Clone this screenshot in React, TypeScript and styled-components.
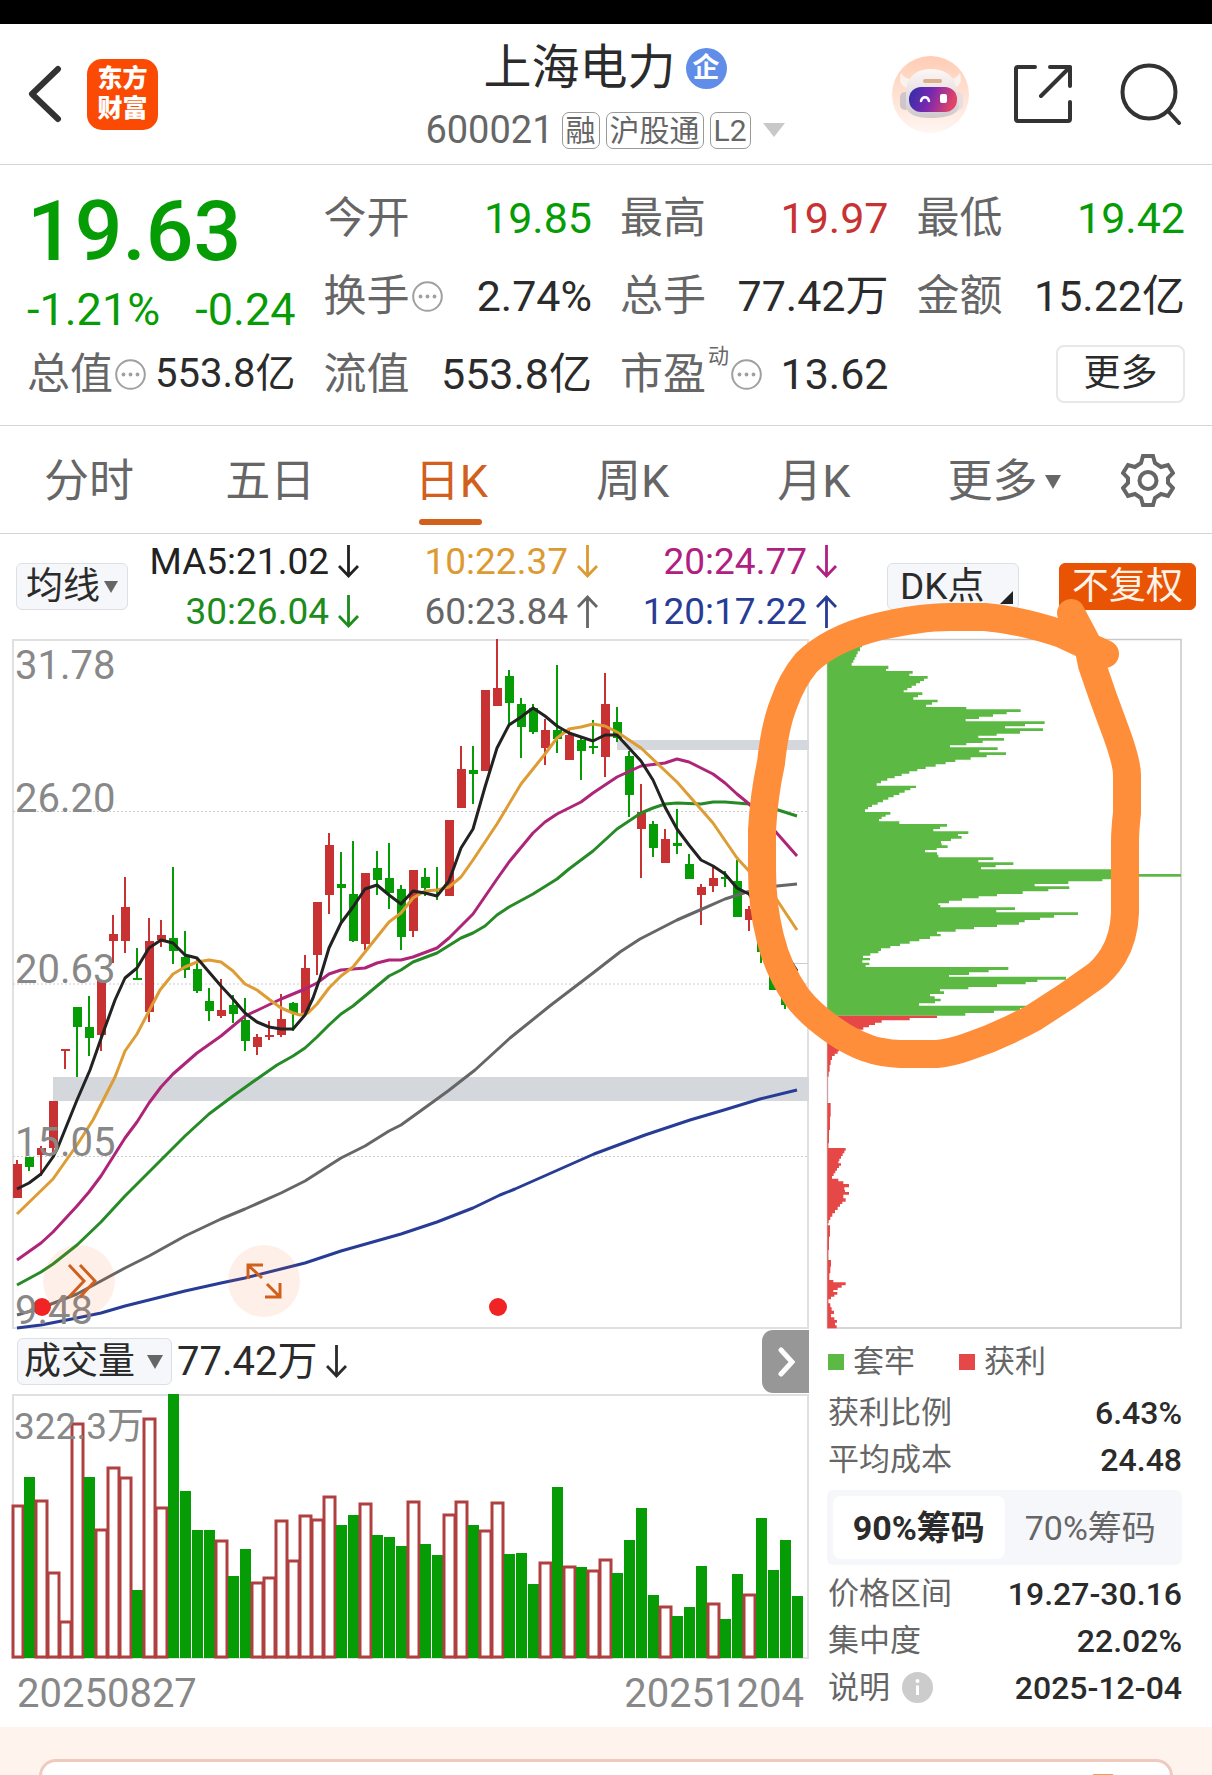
import React from "react";
import styled, { createGlobalStyle } from "styled-components";

const GREEN = "#069c06";
const RED = "#c83232";
const INK = "#2b2b2b";
const MUTED = "#666666";
const AXIS = "#888888";
const ACCENT = "#d0601c";

const Global = createGlobalStyle`
  *, *::before, *::after { box-sizing: border-box; }
  body { margin: 0; background: #fff; }
  body, button {
    font-family: Roboto, "Noto Sans CJK SC", sans-serif;
    color: ${INK};
  }
  button { border: 0; padding: 0; background: none; cursor: pointer; }
  svg { display: block; flex: none; }
`;

const Page = styled.div`
  min-height: 100vh;
  display: flex;
  flex-direction: column;
  overflow: hidden;
`;

const StatusBar = styled.div`
  height: 24px;
  background: #000;
`;

/* ---------- header ---------- */

const Header = styled.header`
  display: grid;
  grid-template-columns: 1fr auto 1fr;
  align-items: center;
  height: 141px;
  padding: 0 30px 0 28px;
  border-bottom: 1px solid #d4d4d4;
`;

const HeaderSide = styled.div<{ $end?: boolean }>`
  display: flex;
  align-items: center;
  justify-content: ${(p) => (p.$end ? "flex-end" : "flex-start")};
  gap: ${(p) => (p.$end ? "44px" : "25px")};
`;

const IconButton = styled.button`
  display: flex;
  align-items: center;
  justify-content: center;
`;

const Logo = styled.a`
  display: flex;
  align-items: center;
  justify-content: center;
  width: 71px;
  height: 71px;
  border-radius: 15px;
  background: #fb4a04;
  color: #fff;
  font-size: 25px;
  font-weight: 900;
  line-height: 30px;
  text-align: center;
  text-decoration: none;
`;

const TitleBlock = styled.div`
  display: flex;
  flex-direction: column;
  align-items: center;
  padding-top: 8px;
`;

const TitleRow = styled.div`
  display: flex;
  align-items: center;
  gap: 10px;
  height: 64px;
`;

const Title = styled.h1`
  margin: 0;
  font-size: 48px;
  font-weight: 400;
  line-height: 64px;
`;

const CompanyBadge = styled.span`
  display: flex;
  align-items: center;
  justify-content: center;
  width: 41px;
  height: 41px;
  border-radius: 50%;
  background: #5f8de8;
  color: #fff;
  font-size: 27px;
  font-weight: 700;
  line-height: 40px;
`;

const CodeRow = styled.div`
  display: flex;
  align-items: center;
  gap: 6px;
  height: 60px;
  color: ${MUTED};
`;

const Code = styled.span`
  margin-right: 2px;
  font-size: 38px;
  line-height: 48px;
`;

const Tag = styled.span`
  height: 37px;
  padding: 0 3px;
  border: 1px solid #999;
  border-radius: 7px;
  font-size: 30px;
  line-height: 35px;
`;

const Caret = styled.span<{ $size?: number; $color?: string }>`
  width: 0;
  height: 0;
  border-style: solid;
  border-color: ${(p) => p.$color || MUTED} transparent transparent;
  border-width: ${(p) => `${(p.$size || 7) * 2 - 2}px ${p.$size || 7}px 0`};
`;

const CodeCaret = styled(Caret)`
  margin-left: 6px;
  border-top-width: 14px;
`;

/* ---------- quote ---------- */

const Quote = styled.section`
  display: grid;
  grid-template-columns: repeat(4, 1fr);
  grid-auto-rows: 78px;
  column-gap: 28px;
  padding: 14px 27px 12px;
  border-bottom: 1px solid #d4d4d4;
`;

const PriceCell = styled.div`
  grid-row: span 2;
  display: flex;
  flex-direction: column;
  padding-top: 8px;
  color: ${GREEN};
`;

const Price = styled.strong`
  font-size: 84px;
  font-weight: 500;
  line-height: 90px;
`;

const Change = styled.div`
  display: flex;
  justify-content: space-between;
  font-size: 45px;
  line-height: 66px;
`;

const Cell = styled.div`
  display: flex;
  align-items: center;
  justify-content: space-between;
  white-space: nowrap;
  line-height: 60px;
`;

const CellLabel = styled.span`
  display: flex;
  align-items: center;
  gap: 2px;
  color: ${MUTED};
  font-size: 43px;
`;

const Sup = styled.sup`
  align-self: flex-start;
  font-size: 21px;
  line-height: 24px;
`;

const CellValue = styled.span<{ $color?: string; $compact?: boolean }>`
  color: ${(p) => p.$color || INK};
  font-size: ${(p) => (p.$compact ? 40 : 43)}px;
`;

const MoreButton = styled.button`
  align-self: center;
  justify-self: end;
  width: 129px;
  height: 58px;
  border: 2px solid #e8e8e8;
  border-radius: 8px;
  font-size: 37px;
  line-height: 50px;
`;

/* ---------- tabs ---------- */

const Tabs = styled.nav`
  display: grid;
  grid-template-columns: repeat(5, 1fr) 200px 84px;
  height: 108px;
  padding-right: 22px;
  border-bottom: 1px solid #d4d4d4;
`;

const Tab = styled.button<{ $active?: boolean }>`
  display: flex;
  align-items: center;
  justify-content: center;
  gap: 8px;
  position: relative;
  padding: 4px 3px 0 0;
  color: ${(p) => (p.$active ? ACCENT : MUTED)};
  font-size: 45px;
  line-height: 60px;

  &::after {
    content: "";
    display: ${(p) => (p.$active ? "block" : "none")};
    position: absolute;
    bottom: 8px;
    left: calc(50% - 34px);
    width: 63px;
    height: 6px;
    border-radius: 3px;
    background: ${ACCENT};
  }
`;

/* ---------- chart area ---------- */

const ChartArea = styled.section`
  position: relative;
`;

const Indicators = styled.div`
  display: flex;
  align-items: center;
  height: 105px;
  padding: 0 16px;
`;

const Chip = styled.button<{ $solid?: boolean }>`
  display: flex;
  align-items: center;
  justify-content: center;
  gap: 4px;
  height: 47px;
  padding: 0 ${(p) => (p.$solid ? 12 : 9)}px;
  border: 1px solid ${(p) => (p.$solid ? "#e85404" : "#dcdfe3")};
  border-radius: 6px;
  background: ${(p) => (p.$solid ? "#e85404" : "#f5f7fa")};
  color: ${(p) => (p.$solid ? "#fff3ea" : INK)};
  font-size: 37px;
  line-height: 44px;
  white-space: nowrap;
`;

const CornerChip = styled(Chip)`
  justify-content: space-between;
  width: 132px;
  margin-left: auto;
  margin-right: 40px;
  padding: 0 5px 0 12px;

  svg {
    align-self: flex-end;
    margin-bottom: 5px;
  }
`;

const Averages = styled.div`
  display: grid;
  grid-template-columns: 231px 239px 239px;
  line-height: 50px;
`;

const Average = styled.span<{ $color: string }>`
  display: flex;
  align-items: center;
  justify-content: flex-end;
  gap: 9px;
  color: ${(p) => p.$color};
  font-size: 37px;
`;

const Panels = styled.div`
  display: grid;
  grid-template-columns: 797fr 355fr;
  column-gap: 18px;
  padding: 0 30px 0 12px;
`;

const Column = styled.div`
  min-width: 0;
`;

const Plot = styled.div`
  position: relative;
`;

const Drawing = styled.svg`
  width: 100%;
  height: auto;
  overflow: visible;
`;

const AxisText = styled.text<{ $small?: boolean }>`
  fill: ${AXIS};
  font-size: ${(p) => (p.$small ? 37 : 40)}px;
`;

const RoundButton = styled.button<{ $left: string }>`
  display: flex;
  align-items: center;
  justify-content: center;
  position: absolute;
  left: ${(p) => p.$left};
  bottom: 12px;
  width: 72px;
  height: 72px;
  border-radius: 50%;
  background: rgba(250, 110, 40, 0.1);
`;

const VolumeHead = styled.div`
  display: flex;
  align-items: center;
  gap: 5px;
  height: 65px;
  padding-left: 5px;
`;

const VolumePick = styled(Chip)`
  width: 155px;
  gap: 12px;
  padding: 0 2px 0 0;
`;

const VolumeValue = styled.span`
  display: flex;
  align-items: center;
  gap: 9px;
  font-size: 40px;
  line-height: 56px;
`;

const Collapse = styled.button`
  display: flex;
  align-items: center;
  justify-content: center;
  width: 47px;
  height: 63px;
  margin-left: auto;
  border-radius: 11px 0 0 11px;
  background: #979797;
`;

const Dates = styled.div`
  display: flex;
  justify-content: space-between;
  padding: 1px 5px 0;
  color: ${AXIS};
  font-size: 40px;
  line-height: 67px;
`;

const Legend = styled.div`
  display: flex;
  align-items: center;
  gap: 44px;
  height: 60px;
  padding: 5px 0 0 1px;
`;

const LegendItem = styled.span<{ $color: string }>`
  display: flex;
  align-items: center;
  gap: 9px;
  color: ${MUTED};
  font-size: 31px;
  line-height: 40px;

  &::before {
    content: "";
    width: 16px;
    height: 16px;
    background: ${(p) => p.$color};
  }
`;

const Stat = styled.div`
  display: flex;
  align-items: center;
  justify-content: space-between;
  height: 47px;
  padding-left: 1px;
  color: ${MUTED};
  font-size: 31px;
  line-height: 44px;
  white-space: nowrap;
`;

const StatLabel = styled.span`
  display: flex;
  align-items: center;
  gap: 12px;
`;

const StatValue = styled.strong`
  color: ${INK};
  font-size: 32px;
  font-weight: 500;
`;

const Segments = styled.div`
  display: grid;
  grid-template-columns: 1fr 1fr;
  height: 75px;
  margin: 7px 0 5px;
  padding: 6px;
  border-radius: 6px;
  background: #f6f7fa;
`;

const Segment = styled.button<{ $active?: boolean }>`
  border-radius: 8px;
  background: ${(p) => (p.$active ? "#fff" : "transparent")};
  color: ${(p) => (p.$active ? INK : MUTED)};
  font-size: 34px;
  font-weight: ${(p) => (p.$active ? 700 : 400)};
  line-height: 60px;
`;

const Marker = styled.svg`
  position: absolute;
  top: 0;
  left: 0;
  width: 100%;
  height: auto;
  pointer-events: none;
`;

const Promo = styled.section`
  flex: 1 0 49px;
  display: flex;
  padding: 32px 39px 0;
  background: #fff3ee;
`;

const PromoCard = styled.div`
  flex: 1;
  display: flex;
  justify-content: flex-end;
  align-items: flex-end;
  padding-right: 56px;
  border: 3px solid #efcabd;
  border-bottom: 0;
  border-radius: 24px 24px 0 0;
  background: #fff;
`;

const PromoDot = styled.span`
  width: 22px;
  height: 2px;
  border-radius: 11px 11px 0 0;
  background: #eca055;
`;

/* ---------- small drawings ---------- */

const Dots = () => (
  <svg width="31" height="31" viewBox="0 0 31 31" aria-hidden="true">
    <circle cx="15.5" cy="15.5" r="14.3" fill="none" stroke="#a0a0a0" strokeWidth="2" />
    {[8.5, 15.5, 22.5].map((x) => (
      <circle key={x} cx={x} cy="15.5" r="1.9" fill="#a0a0a0" />
    ))}
  </svg>
);

const Arrow = ({ up = false, height = 33 }: { up?: boolean; height?: number }) => (
  <svg width="21" height={height} viewBox="0 0 21 33" fill="none" stroke="currentColor" strokeWidth="2.8" aria-hidden="true">
    <path d={up ? "M10.5 33V2M1 12l9.5-10L20 12" : "M10.5 0v31M1 21l9.5 10L20 21"} />
  </svg>
);

const Robot = () => (
  <svg width="77" height="77" viewBox="0 0 77 77" aria-hidden="true">
    <defs>
      <linearGradient id="halo" x1="0" y1="0" x2="0" y2="1">
        <stop offset="0" stopColor="#ffccb3" />
        <stop offset="1" stopColor="#fff6f2" />
      </linearGradient>
      <linearGradient id="visor" x1="0" y1="0" x2="1" y2="0.2">
        <stop offset="0" stopColor="#2c2fa8" />
        <stop offset="0.5" stopColor="#7a28b0" />
        <stop offset="1" stopColor="#e04468" />
      </linearGradient>
      <linearGradient id="shell" x1="0" y1="0" x2="0" y2="1">
        <stop offset="0" stopColor="#fdf8f6" />
        <stop offset="1" stopColor="#cfc8cc" />
      </linearGradient>
    </defs>
    <circle cx="38.5" cy="38.5" r="38.5" fill="url(#halo)" />
    <path d="M9 17c-2 7-1 13 6 15l8-9c-6 1-11-1-14-6zM68 17c2 7 1 13-6 15l-8-9c6 1 11-1 14-6z" fill="#fbf1ee" />
    <rect x="8" y="36" width="10" height="18" rx="5" fill="#cfc6cc" />
    <rect x="61" y="36" width="10" height="18" rx="5" fill="#e9dde0" />
    <path d="M14 38c0-16 9-25 25-25s26 9 26 25l2 12c0 8-12 12-28 12S15 58 14 50z" fill="url(#shell)" />
    <rect x="31" y="23" width="19" height="4" rx="2" fill="#dcae8b" />
    <rect x="17" y="31" width="48" height="25" rx="12" fill="url(#visor)" />
    <path d="M29 45c1-5 7-5 8 0" fill="none" stroke="#fff" strokeWidth="2.5" strokeLinecap="round" />
    <rect x="48" y="38" width="7" height="9" rx="2" fill="#fff" />
  </svg>
);

const Gear = () => (
  <svg width="54" height="54" viewBox="0 0 54 54" fill="none" stroke={MUTED} strokeWidth="4" aria-hidden="true">
    <path d="M22 3h10l2 7 6 4 7-2 5 8-5 5v5l5 5-5 8-7-2-6 4-2 7H22l-2-7-6-4-7 2-5-8 5-5v-5l-5-5 5-8 7 2 6-4z" />
    <circle cx="27" cy="27.5" r="8.5" />
  </svg>
);

/* ---------- data ---------- */

type Candle = [up: 0 | 1, high: number, top: number, bottom: number, low: number];

const candles: Candle[] = [
  [1, 1160, 1164, 1198, 1198], [0, 1157, 1157, 1167, 1171], [1, 1146, 1148, 1155, 1176], [1, 1101, 1101, 1148, 1155],
  [1, 1049, 1049, 1051, 1069], [0, 1007, 1007, 1027, 1077], [0, 996, 1027, 1038, 1056], [1, 980, 980, 1035, 1051],
  [1, 915, 934, 941, 963], [1, 877, 907, 941, 953], [0, 948, 978, 980, 980], [1, 918, 941, 1012, 1022],
  [1, 920, 935, 940, 947], [0, 867, 938, 951, 964], [0, 931, 957, 970, 978], [0, 958, 969, 991, 993],
  [0, 988, 1001, 1011, 1021], [1, 979, 1010, 1016, 1018], [0, 995, 1005, 1014, 1023], [0, 998, 1020, 1041, 1051],
  [1, 1034, 1037, 1047, 1055], [1, 1021, 1035, 1037, 1040], [1, 994, 1019, 1035, 1037], [0, 1002, 1003, 1013, 1031],
  [1, 955, 968, 1013, 1013], [1, 902, 902, 955, 975], [1, 833, 845, 895, 914], [0, 852, 884, 888, 925],
  [0, 841, 894, 941, 942], [1, 873, 873, 944, 950], [0, 851, 868, 880, 895], [0, 843, 878, 893, 909],
  [0, 885, 889, 937, 950], [1, 870, 870, 931, 937], [0, 868, 877, 888, 896], [0, 867, 889, 891, 900],
  [1, 820, 820, 896, 896], [1, 746, 769, 808, 808], [0, 746, 770, 774, 804], [1, 690, 690, 771, 771],
  [1, 639, 688, 706, 706], [0, 670, 676, 703, 724], [0, 698, 704, 727, 758], [0, 704, 708, 732, 734],
  [1, 719, 730, 748, 765], [0, 665, 730, 739, 753], [1, 728, 735, 760, 760], [0, 736, 740, 751, 780],
  [0, 720, 746, 748, 754], [1, 673, 704, 757, 777], [0, 707, 722, 738, 742], [0, 751, 756, 795, 817],
  [1, 784, 812, 829, 878], [0, 821, 824, 848, 857], [1, 829, 839, 863, 863], [0, 809, 843, 846, 854],
  [0, 854, 864, 879, 879], [1, 884, 887, 895, 925], [1, 867, 878, 886, 892], [0, 871, 877, 879, 887],
  [0, 860, 881, 917, 917], [1, 906, 909, 920, 931], [0, 930, 930, 952, 963], [0, 950, 950, 990, 990],
  [0, 985, 985, 1005, 1009],
];

const averages: { color: string; points: string }[] = [
  { color: "#666", points: "17,1315 41,1308 77,1294 101,1281 125,1268 149,1256 185,1236 221,1219 245,1209 281,1193 305,1181 341,1158 365,1146 389,1131 401,1125 437,1099 448,1091 475,1070 510,1038 551,1005 593,973 620,952 640,939 677,920 700,910 725,899 747,892 777,886 797,884" },
  { color: "#283c96", points: "17,1328 41,1325 77,1318 101,1313 125,1306 149,1300 185,1291 221,1283 245,1278 305,1263 341,1251 401,1234 437,1222 473,1208 500,1195 515,1189 594,1154 645,1135 690,1120 724,1110 760,1099 797,1090" },
  { color: "#268a26", points: "17,1285 41,1272 53,1264 77,1245 101,1222 125,1196 149,1172 185,1136 209,1114 233,1096 257,1079 277,1065 293,1056 305,1048 317,1037 329,1025 341,1014 353,1006 365,996 389,976 401,970 413,962 437,953 461,938 473,933 485,926 497,915 509,907 533,894 557,879 569,869 593,851 617,829 641,813 653,808 665,804 677,803 701,804 713,802 725,802 749,804 775,809 797,816" },
  { color: "#ae2478", points: "17,1260 41,1243 53,1232 77,1206 89,1192 101,1176 125,1138 137,1122 149,1103 161,1087 173,1074 197,1053 221,1036 245,1016 258,1010 281,999 305,989 317,983 329,974 341,970 365,968 377,963 389,960 401,960 413,957 437,948 449,938 473,914 497,879 509,862 533,833 545,822 557,814 569,808 581,802 593,793 617,777 641,766 665,763 677,759 689,762 701,768 713,774 725,783 737,794 748,803 775,831 797,856" },
  { color: "#de9c34", points: "17,1214 53,1179 77,1145 93,1120 115,1077 125,1051 137,1034 149,1011 160,990 173,974 185,967 197,962 209,960 221,962 233,971 245,984 257,990 270,1000 281,1008 293,1013 300,1015 308,1013 317,1004 329,988 341,976 353,967 365,952 377,937 389,922 401,913 413,898 425,891 437,890 449,887 461,877 473,860 497,824 521,784 533,769 545,754 557,738 569,729 581,727 593,724 605,726 617,732 629,740 641,748 677,782 713,823 737,858 749,871 775,897 797,930" },
  { color: "#222", points: "17,1189 29,1183 41,1174 53,1157 58,1147 77,1100 90,1070 103,1033 115,1000 125,978 137,968 149,948 161,940 173,943 185,955 197,958 209,972 221,986 233,999 245,1013 257,1022 269,1027 281,1029 293,1029 305,1015 313,998 320,978 329,948 341,923 353,907 365,889 377,885 389,895 401,904 413,891 425,893 437,896 449,881 461,848 473,829 485,787 497,748 509,725 521,717 533,708 545,716 557,726 569,733 581,737 593,741 605,735 617,735 629,748 641,761 653,780 665,807 677,829 689,845 701,860 713,866 725,874 737,888 749,894 785,952 797,971" },
];

/* positive = rising day (outlined), negative = falling day (filled); value is the bar height */
const volumes = [
  153, -181, 158, 86, 37, 235, -181, 129, 191, 181, -68, 240, 151, -264, -167, -128, -128, 118, -82, -109, 76, 81, 138,
  98, 143, 139, 162, -133, -143, 155, -123, -121, -112, 157, -114, -103, 144, 157, -133, 128, 156, -104, -105, -74, 96,
  -171, 92, -91, 88, 99, -85, -118, -150, -63, 52, -42, -51, -92, 55, -39, -84, 64, -140, -88, -118, -62,
];

/* [y, x] steps of the holding-cost histogram in thirds of a pixel */
const trapped = [
  [28, 190], [40, 186], [52, 180], [64, 173], [73, 169], [82, 164], [90, 160], [98, 155],
  [107, 265], [117, 258], [123, 338], [131, 328], [138, 383], [146, 372], [153, 360], [160, 348], [167, 335], [174, 322],
  [181, 311], [187, 367], [195, 354], [202, 340], [209, 413], [217, 396], [224, 378], [231, 499], [238, 662], [246, 620],
  [253, 579], [260, 537], [267, 497], [274, 734], [282, 675], [289, 615], [295, 729], [303, 660], [311, 590], [317, 535],
  [324, 612], [332, 548], [339, 499], [346, 450], [352, 593], [360, 538], [367, 618], [375, 560], [382, 512], [389, 466],
  [396, 437], [403, 407], [410, 377], [417, 352], [424, 328], [431, 305], [438, 284], [445, 262], [452, 243], [460, 230],
  [467, 348], [474, 331], [481, 314], [488, 298], [495, 281], [502, 265], [509, 249], [517, 233], [524, 216], [531, 204],
  [538, 195], [546, 271], [554, 257], [560, 245], [567, 237], [574, 298], [582, 441], [590, 420], [597, 400], [604, 505],
  [612, 474], [618, 485], [626, 453], [633, 423], [640, 425], [646, 443], [654, 410], [660, 375], [667, 411], [674, 415],
  [682, 580], [690, 535], [697, 640], [705, 587], [712, 543], [718, 945], [732, 1143], [740, 945], [748, 907], [754, 805],
  [762, 704], [769, 808], [777, 745], [784, 668], [792, 591], [799, 536], [805, 486], [812, 447], [820, 415], [825, 421],
  [832, 645], [840, 589], [847, 834], [855, 762], [863, 720], [870, 674], [877, 657], [884, 591], [891, 522], [898, 467],
  [905, 411], [912, 422], [919, 390], [927, 358], [934, 329], [941, 300], [948, 271], [955, 243], [963, 235], [970, 211],
  [977, 189], [984, 210], [991, 187], [998, 208], [1005, 197], [1011, 625], [1020, 566], [1027, 507], [1035, 447],
  [1040, 798], [1049, 712], [1056, 677], [1063, 591], [1071, 505], [1078, 420], [1084, 432], [1092, 390], [1099, 404],
  [1106, 422], [1114, 405], [1120, 357], [1127, 690], [1134, 660], [1142, 582], [1149, 496], [1157, 82],
];

const profit = [
  [1157, 411], [1164, 329], [1171, 245], [1178, 225], [1185, 207], [1192, 190], [1199, 170], [1207, 150], [1215, 135],
  [1225, 128], [1240, 122], [1255, 117], [1264, 113], [1271, 104], [1278, 96], [1290, 92], [1305, 89], [1325, 86],
  [1340, 83], [1419, 92], [1460, 90], [1500, 87], [1540, 85], [1554, 137], [1562, 133], [1570, 128], [1578, 123],
  [1586, 118], [1594, 115], [1600, 123], [1607, 117], [1614, 111], [1622, 106], [1630, 101], [1638, 96], [1646, 115],
  [1654, 130], [1662, 147], [1672, 133], [1680, 135], [1686, 147], [1694, 130], [1705, 137], [1715, 127], [1722, 120],
  [1730, 113], [1740, 105], [1750, 97], [1760, 91], [1770, 86], [1780, 83], [1786, 90], [1820, 87], [1860, 85],
  [1890, 93], [1910, 91], [1930, 88], [1950, 100], [1957, 137], [1966, 125], [1973, 113], [1980, 100], [1986, 112],
  [1994, 103], [2000, 93], [2008, 85], [2020, 91], [2032, 95], [2042, 102], [2052, 93], [2062, 103], [2070, 111],
  [2078, 105], [2086, 110], [2095, 82],
];

const stepPath = (steps: number[][]) =>
  `M82 ${steps[0][0]}` + steps.map(([y, x]) => `V${y}H${x}`).join("") + "H82Z";

const tabs = ["分时", "五日", "日K", "周K", "月K"];

const maValues = [
  { text: "MA5:21.02", color: "#222222", up: false },
  { text: "10:22.37", color: "#dc9a32", up: false },
  { text: "20:24.77", color: "#b02080", up: false },
  { text: "30:26.04", color: "#1c8c1c", up: false },
  { text: "60:23.84", color: "#666666", up: true },
  { text: "120:17.22", color: "#283c96", up: true },
];

const axisLabels: [string, number][] = [
  ["31.78", 679], ["26.20", 812], ["20.63", 983], ["15.05", 1156], ["9.48", 1324],
];

/* ---------- charts ---------- */

const PriceChart = () => (
  <Drawing viewBox="12 639 797 690" role="img" aria-label="日K线图">
    <rect x="13" y="640" width="795" height="688" fill="none" stroke="#e0e0e0" strokeWidth="2" />
    {[811.5, 984, 1156.5].map((y) => (
      <path key={y} d={`M13 ${y}H808`} stroke="#cccccc" strokeDasharray="2 2" />
    ))}
    <rect x="53" y="1077" width="756" height="24" fill="#d4d7dc" />
    <rect x="617" y="740" width="192" height="10" fill="#d4d7dc" />
    <path d="M790 963.5H808" stroke="#cccccc" />
    {candles.map(([up, high, top, bottom, low], i) => {
      const x = 17 + i * 12;
      return (
        <g key={i} fill={up ? RED : GREEN}>
          <rect x={x - 1} y={high} width="2" height={low - high} />
          <rect x={x - 4} y={top} width="9" height={bottom - top} />
        </g>
      );
    })}
    {averages.map((a) => (
      <polyline key={a.color} points={a.points} fill="none" stroke={a.color} strokeWidth="3" strokeLinejoin="round" />
    ))}
    <circle cx="42" cy="1307" r="9" fill="#f02424" />
    <circle cx="498" cy="1307" r="9" fill="#f02424" />
    {axisLabels.map(([label, y]) => (
      <AxisText key={label} x="15" y={y}>{label}</AxisText>
    ))}
  </Drawing>
);

const VolumeChart = () => (
  <Drawing viewBox="0 0 797 265" role="img" aria-label="成交量图">
    <rect x="1" y="1" width="795" height="263" fill="none" stroke="#e0e0e0" strokeWidth="2" />
    {volumes.map((v, i) =>
      v < 0 ? (
        <rect key={i} x={i * 12} y={264 + v} width="11" height={-v} fill={GREEN} />
      ) : (
        <rect
          key={i}
          x={Math.max(i * 12, 1)}
          y={265 - v}
          width={i ? 11 : 10}
          height={v - 2}
          fill="#fff"
          stroke="#b04040"
          strokeWidth="3"
        />
      ),
    )}
    <AxisText $small x="2" y="45">322.3万</AxisText>
  </Drawing>
);

const CostChart = () => (
  <Drawing viewBox="827 639 355 690" role="img" aria-label="筹码分布">
    <path d="M827.5 639.5H1181V1328H827.5Z" fill="none" stroke="#c8c8c8" strokeWidth="1.5" />
    <g transform="translate(800 630) scale(0.33333)">
      <path d={stepPath(trapped)} fill="#5cba44" />
      <path d={stepPath(profit)} fill="#e64848" />
    </g>
  </Drawing>
);

const HandCircle = () => (
  <Marker viewBox="0 534 1212 1192" fill="none" stroke="#ff8e3a" strokeWidth="28" strokeLinecap="round" strokeLinejoin="round" aria-hidden="true">
    <path d="M1071 613L1088 645L1092 665L1103 697L1117 735Q1127 763 1127 775V813Q1125 830 1125 843V913Q1124 938 1113 956Q1104 970 1094 977L1067 996L1033 1018Q1000 1036 967 1047Q950 1053 937 1054H900Q880 1053 867 1048Q850 1042 833 1030Q810 1014 797 997Q778 970 770 937Q762 905 762 870V830Q764 795 771 763Q775 725 784 703Q792 680 806 663Q830 639 877 627Q920 617 950 617H985Q1020 620 1062 634L1094 649L1105 654" />
  </Marker>
);

export default function App() {
  return (
    <>
      <Global />
      <Page>
        <StatusBar />
        <Header>
          <HeaderSide>
            <IconButton aria-label="返回">
              <svg width="34" height="58" viewBox="0 0 34 58" fill="none" stroke="#333" strokeWidth="6" strokeLinecap="round" strokeLinejoin="round">
                <path d="M30 4L4 29L30 54" />
              </svg>
            </IconButton>
            <Logo href="#home">东方<br />财富</Logo>
          </HeaderSide>
          <TitleBlock>
            <TitleRow>
              <Title>上海电力</Title>
              <CompanyBadge>企</CompanyBadge>
            </TitleRow>
            <CodeRow>
              <Code>600021</Code>
              <Tag>融</Tag>
              <Tag>沪股通</Tag>
              <Tag>L2</Tag>
              <CodeCaret $size={11} $color="#c8c8c8" />
            </CodeRow>
          </TitleBlock>
          <HeaderSide $end>
            <IconButton aria-label="智能助手"><Robot /></IconButton>
            <IconButton aria-label="分享">
              <svg width="60" height="60" viewBox="0 0 60 60" fill="none" stroke="#333" strokeWidth="4" strokeLinecap="round" strokeLinejoin="round">
                <path d="M22 3H5Q3 3 3 5V55Q3 57 5 57H55Q57 57 57 55V38M37 3H57V22M57 3L28 32" />
              </svg>
            </IconButton>
            <IconButton aria-label="搜索">
              <svg width="65" height="62" viewBox="-3 0 65 62" fill="none" stroke="#333" strokeWidth="4" strokeLinecap="round">
                <circle cx="29" cy="29" r="26.5" />
                <path d="M48 48L59 60" />
              </svg>
            </IconButton>
          </HeaderSide>
        </Header>

        <Quote>
          <PriceCell>
            <Price>19.63</Price>
            <Change><span>-1.21%</span><span>-0.24</span></Change>
          </PriceCell>
          <Cell><CellLabel>今开</CellLabel><CellValue $color={GREEN}>19.85</CellValue></Cell>
          <Cell><CellLabel>最高</CellLabel><CellValue $color={RED}>19.97</CellValue></Cell>
          <Cell><CellLabel>最低</CellLabel><CellValue $color={GREEN}>19.42</CellValue></Cell>
          <Cell><CellLabel>换手<Dots /></CellLabel><CellValue>2.74%</CellValue></Cell>
          <Cell><CellLabel>总手</CellLabel><CellValue>77.42万</CellValue></Cell>
          <Cell><CellLabel>金额</CellLabel><CellValue>15.22亿</CellValue></Cell>
          <Cell><CellLabel>总值<Dots /></CellLabel><CellValue $compact>553.8亿</CellValue></Cell>
          <Cell><CellLabel>流值</CellLabel><CellValue>553.8亿</CellValue></Cell>
          <Cell><CellLabel>市盈<Sup>动</Sup><Dots /></CellLabel><CellValue>13.62</CellValue></Cell>
          <MoreButton>更多</MoreButton>
        </Quote>

        <Tabs>
          {tabs.map((t) => (
            <Tab key={t} $active={t === "日K"}>{t}</Tab>
          ))}
          <Tab>更多<Caret $size={8} /></Tab>
          <IconButton aria-label="设置"><Gear /></IconButton>
        </Tabs>

        <ChartArea>
          <Indicators>
            <Chip>均线<Caret /></Chip>
            <Averages>
              {maValues.map((m) => (
                <Average key={m.text} $color={m.color}>{m.text}<Arrow up={m.up} /></Average>
              ))}
            </Averages>
            <CornerChip>
              DK点
              <svg width="13" height="13" viewBox="0 0 13 13" aria-hidden="true"><path d="M13 0V13H0Z" fill="#222" /></svg>
            </CornerChip>
            <Chip $solid>不复权</Chip>
          </Indicators>

          <Panels>
            <Column>
              <Plot>
                <PriceChart />
                <RoundButton $left="31px" aria-label="快进">
                  <svg width="36" height="34" viewBox="-6 0 36 34" fill="none" stroke={ACCENT} strokeWidth="3">
                    <path d="M2 1L17 17L2 33M13 1L28 17L13 33" />
                  </svg>
                </RoundButton>
                <RoundButton $left="216px" aria-label="全屏">
                  <svg width="36" height="36" viewBox="0 0 36 36" fill="none" stroke={ACCENT} strokeWidth="3">
                    <path d="M2 16V2H17M2 2L16 15M34 20V34H19M34 34L21 21" />
                  </svg>
                </RoundButton>
              </Plot>
              <VolumeHead>
                <VolumePick>成交量<Caret $size={8} /></VolumePick>
                <VolumeValue>77.42万<Arrow height={35} /></VolumeValue>
                <Collapse aria-label="收起">
                  <svg width="18" height="30" viewBox="0 0 18 30" fill="none" stroke="#fff" strokeWidth="5" strokeLinecap="round">
                    <path d="M4 3L15 15L4 27" />
                  </svg>
                </Collapse>
              </VolumeHead>
              <VolumeChart />
              <Dates><span>20250827</span><span>20251204</span></Dates>
            </Column>

            <Column>
              <CostChart />
              <Legend>
                <LegendItem $color="#5cba44">套牢</LegendItem>
                <LegendItem $color="#e64848">获利</LegendItem>
              </Legend>
              <Stat><StatLabel>获利比例</StatLabel><StatValue>6.43%</StatValue></Stat>
              <Stat><StatLabel>平均成本</StatLabel><StatValue>24.48</StatValue></Stat>
              <Segments>
                <Segment $active>90%筹码</Segment>
                <Segment>70%筹码</Segment>
              </Segments>
              <Stat><StatLabel>价格区间</StatLabel><StatValue>19.27-30.16</StatValue></Stat>
              <Stat><StatLabel>集中度</StatLabel><StatValue>22.02%</StatValue></Stat>
              <Stat>
                <StatLabel>
                  说明
                  <svg width="31" height="31" viewBox="0 0 31 31" aria-hidden="true">
                    <circle cx="15.5" cy="15.5" r="15.5" fill="#cccccc" />
                    <circle cx="15.5" cy="9" r="2" fill="#fff" />
                    <path d="M15.5 13.5V23" stroke="#fff" strokeWidth="3" />
                  </svg>
                </StatLabel>
                <StatValue>2025-12-04</StatValue>
              </Stat>
            </Column>
          </Panels>
          <HandCircle />
        </ChartArea>

        <Promo>
          <PromoCard><PromoDot /></PromoCard>
        </Promo>
      </Page>
    </>
  );
}
